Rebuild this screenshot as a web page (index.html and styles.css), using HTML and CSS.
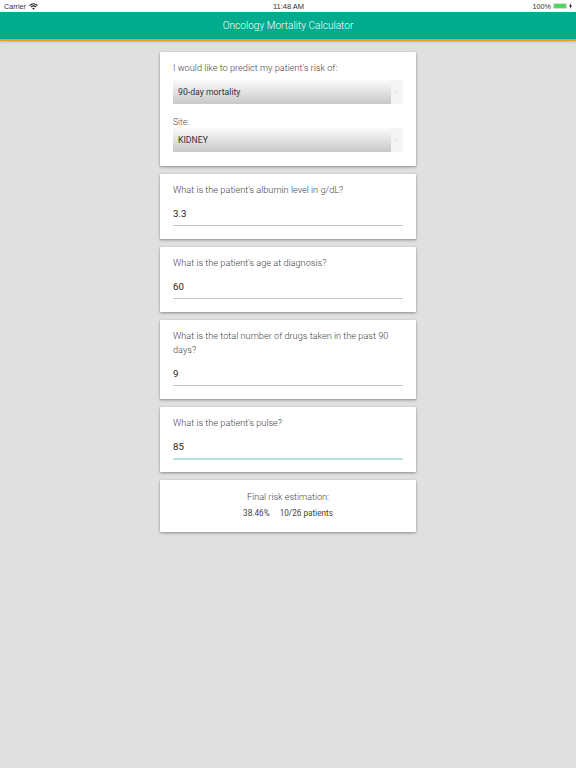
FILE: index.html
```html
<!DOCTYPE html>
<html lang="en">
<head>
    <meta charset="UTF-8">
    <meta name="viewport" content="width=device-width, initial-scale=1.0">
    <title>Oncology Mortality Calculator</title>
    <link rel="stylesheet" href="styles.css">
</head>
<body>
    <div class="status-bar">
        <div class="status-left">
            <span>Carrier</span>
            <svg class="wifi" width="9" height="7" viewBox="0 0 18 14">
                <path d="M1 5 Q9 -2 17 5" fill="none" stroke="#222" stroke-width="2.4"/>
                <path d="M4 8 Q9 3.5 14 8" fill="none" stroke="#222" stroke-width="2.4"/>
                <path d="M6.2 10.5 Q9 8.2 11.8 10.5 L9 13.6 Z" fill="#222"/>
            </svg>
        </div>
        <div class="status-time">11:48 AM</div>
        <div class="status-right">
            <span>100%</span>
            <div class="battery"><div class="battery-level"></div></div>
            <svg width="3" height="6" viewBox="0 0 6 12">
                <path d="M4 0 L0 7 H2.5 L2 12 L6 5 H3.5 Z" fill="#222"/>
            </svg>
        </div>
    </div>
    <header class="toolbar">Oncology Mortality Calculator</header>

    <main class="content">
        <section class="card card-selects">
            <p class="question">I would like to predict my patient's risk of:</p>
            <div class="select">
                <div class="select-value">90-day mortality</div>
                <div class="select-arrow">&#8964;</div>
            </div>
            <p class="select-label">Site:</p>
            <div class="select">
                <div class="select-value">KIDNEY</div>
                <div class="select-arrow">&#8964;</div>
            </div>
        </section>

        <section class="card">
            <p class="question">What is the patient's albumin level in g/dL?</p>
            <div class="field">3.3</div>
        </section>

        <section class="card">
            <p class="question">What is the patient's age at diagnosis?</p>
            <div class="field">60</div>
        </section>

        <section class="card">
            <p class="question">What is the total number of drugs taken in the past 90 days?</p>
            <div class="field">9</div>
        </section>

        <section class="card">
            <p class="question">What is the patient's pulse?</p>
            <div class="field field-active">85</div>
        </section>

        <section class="card card-result">
            <p class="result-title">Final risk estimation:</p>
            <p class="result-values"><span>38.46%</span><span>10/26 patients</span></p>
        </section>
    </main>
</body>
</html>
```

FILE: styles.css
```css
body {
    margin: 0;
    min-height: 768px;
    background: #e0e0e0;
    font-family: 'Roboto', 'Liberation Sans', sans-serif;
    overflow: hidden;
}

.status-bar {
    display: flex;
    justify-content: space-between;
    align-items: center;
    position: relative;
    height: 12px;
    padding: 0 4px;
    background: #fff;
    color: #333;
    font-family: 'Liberation Sans', sans-serif;
    font-size: 7.2px;
}

.status-left,
.status-right {
    display: flex;
    align-items: center;
    gap: 2px;
}

.status-left {
    gap: 3px;
}

.status-time {
    position: absolute;
    left: 1px;
    right: 0;
    text-align: center;
    font-size: 7.5px;
}

.battery {
    width: 14px;
    height: 6px;
    padding: 1px;
    box-sizing: border-box;
    border-radius: 1px;
    background: #ddd;
}

.battery-level {
    height: 100%;
    background: #4cd964;
}

.toolbar {
    height: 27px;
    line-height: 27px;
    background: #00ab8e;
    border-bottom: 2px solid #f39a1e;
    box-shadow: 0 1px 2px rgba(0, 0, 0, 0.2);
    color: #fff;
    font-size: 10.1px;
    font-weight: 300;
    text-align: center;
}

.content {
    display: flex;
    flex-direction: column;
    gap: 8px;
    width: 256px;
    margin: 11px auto 0;
}

.card {
    padding: 9px 13px 13px;
    background: #fff;
    border-radius: 1px;
    box-shadow: 0 1px 3px rgba(0, 0, 0, 0.4);
}

.card p {
    margin: 0;
}

.card-selects {
    padding-bottom: 14px;
}

.question {
    color: #444;
    font-size: 9.2px;
    font-weight: 300;
    line-height: 14px;
}

.select {
    display: flex;
    height: 24px;
    margin-top: 5px;
}

.select-value {
    flex: 1;
    padding-left: 5px;
    line-height: 24px;
    background: linear-gradient(#fbfbfb, #c8c8c8);
    color: #333;
    font-size: 8.7px;
}

.select-arrow {
    width: 12px;
    line-height: 22px;
    background: #f4f4f4;
    color: #ddd;
    font-size: 7px;
    text-align: center;
}

.card .select-label {
    margin-top: 13px;
    color: #444;
    font-size: 8.5px;
    font-weight: 300;
    line-height: 10px;
}

.select-label + .select {
    margin-top: 1px;
}

.field {
    height: 23px;
    margin-top: 5px;
    line-height: 23px;
    border-bottom: 1px solid #c4c4c4;
    color: #222;
    font-size: 9.6px;
}

.card .field-active {
    height: 23px;
    margin-bottom: -1px;
    border-bottom: 2px solid #b5e3dc;
}

.card-result {
    padding-top: 10px;
    text-align: center;
}

.result-title {
    color: #444;
    font-size: 9.1px;
    font-weight: 300;
    line-height: 14px;
}

.card .result-values {
    display: flex;
    justify-content: center;
    gap: 10px;
    margin-top: 3px;
    color: #444;
    font-size: 8.2px;
    line-height: 12px;
}
```
